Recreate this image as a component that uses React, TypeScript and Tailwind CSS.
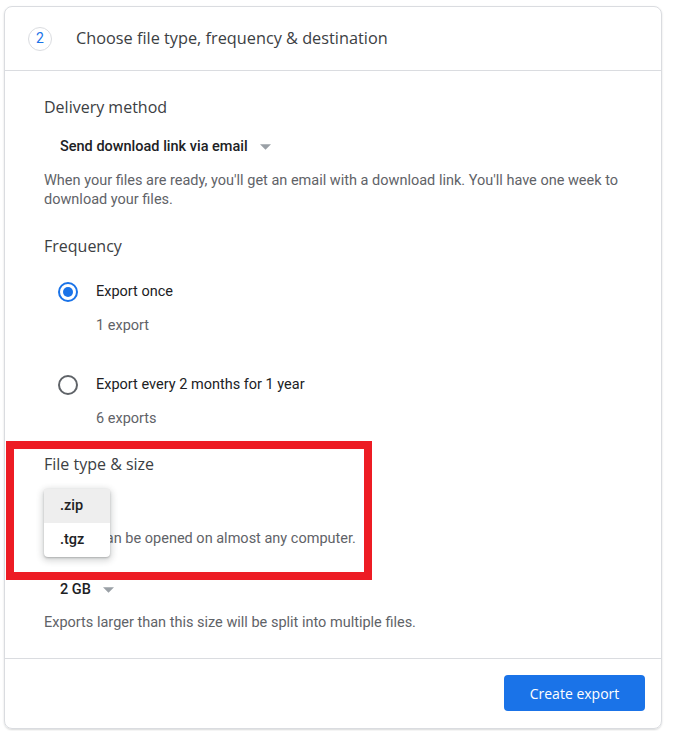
import React from "react";

const heading = { fontFamily: '"Open Sans", "Noto Sans", sans-serif' };
const body = { fontFamily: 'Roboto, "Liberation Sans", sans-serif' };

function Caret() {
  return (
    <svg width="11" height="6" viewBox="0 0 10 5" className="ml-3">
      <path d="M0 0 L5 5 L10 0 Z" fill="#9aa0a6" />
    </svg>
  );
}

function Radio({ checked }: { checked?: boolean }) {
  if (checked) {
    return (
      <span className="flex h-5 w-5 items-center justify-center rounded-full border-2 border-[#1a73e8]">
        <span className="h-2.5 w-2.5 rounded-full bg-[#1a73e8]" />
      </span>
    );
  }
  return <span className="h-5 w-5 rounded-full border-2 border-[#5f6368]" />;
}

function Option({ label, count, checked }: { label: string; count: string; checked?: boolean }) {
  return (
    <div className="ml-[14px]">
      <div className="flex h-5 items-center">
        <Radio checked={checked} />
        <span className="ml-[18px] text-[14.5px] text-[#202124]">{label}</span>
      </div>
      <div className="ml-[38px] mt-[14px] text-[14.5px] leading-5 text-[#5f6368]">{count}</div>
    </div>
  );
}

export default function App() {
  return (
    <div className="min-h-screen bg-white pl-1 pt-1.5" style={body}>
      <div className="relative w-[658px] rounded-lg border border-[#dadce0] shadow-[0_1px_2px_rgba(60,64,67,0.2)]">
        <div className="flex h-[64px] items-center border-b border-[#dadce0] pl-[23px]">
          <span className="flex h-6 w-6 items-center justify-center rounded-full border border-[#dadce0] text-[14px] text-[#1a73e8]">
            2
          </span>
          <span className="ml-6 text-[16.3px] text-[#3c4043]" style={heading}>
            Choose file type, frequency &amp; destination
          </span>
        </div>

        <div className="pb-[25px] pl-[39px] pr-10 pt-6">
          <div className="text-[16px] leading-6 text-[#3c4043]" style={heading}>
            Delivery method
          </div>
          <div className="mt-[18px] flex h-5 items-center pl-4">
            <span className="text-[14.5px] font-medium text-[#202124]">Send download link via email</span>
            <Caret />
          </div>
          <p className="mt-[14px] text-[14.5px] leading-[19px] text-[#5f6368]">
            When your files are ready, you'll get an email with a download link. You'll have one week to
            download your files.
          </p>

          <div className="mt-[25px] text-[16px] leading-6 text-[#3c4043]" style={heading}>
            Frequency
          </div>
          <div className="mt-[24px]">
            <Option label="Export once" count="1 export" checked />
          </div>
          <div className="mt-[39px]">
            <Option label="Export every 2 months for 1 year" count="6 exports" />
          </div>

          <div className="mt-[23px] text-[16px] leading-6 text-[#3c4043]" style={heading}>
            File type &amp; size
          </div>
          <div className="mt-[17px] flex h-5 items-center pl-4">
            <span className="text-[14.5px] font-medium text-[#202124]">.zip</span>
            <Caret />
          </div>
          <p className="mt-[16px] text-[14.5px] leading-5 text-[#5f6368]">
            Zip files can be opened on almost any computer.
          </p>
          <div className="mt-[31px] flex h-5 items-center pl-4">
            <span className="text-[14.5px] font-medium text-[#202124]">2 GB</span>
            <Caret />
          </div>
          <p className="mt-[13px] text-[14.5px] leading-5 text-[#5f6368]">
            Exports larger than this size will be split into multiple files.
          </p>
        </div>

        <div className="flex justify-end border-t border-[#dadce0] pb-[17px] pr-4 pt-4">
          <button className="h-9 w-[141px] rounded bg-[#1a73e8] text-[14px] font-medium text-white" style={heading}>
            Create export
          </button>
        </div>

        <div className="absolute left-[39px] top-[482px] w-[66px] rounded bg-white shadow-[0_2px_6px_2px_rgba(60,64,67,0.2),0_1px_2px_rgba(60,64,67,0.3)]">
          <div className="flex h-[34px] items-center bg-[#eeeeee] pl-4 text-[14.5px] font-medium text-[#202124]">.zip</div>
          <div className="flex h-[34px] items-center pl-4 text-[14.5px] font-medium text-[#202124]">.tgz</div>
        </div>

        <div className="pointer-events-none absolute left-[1px] top-[434px] h-[139px] w-[366px] border-[8px] border-[#ed1c24]" />
      </div>
    </div>
  );
}
